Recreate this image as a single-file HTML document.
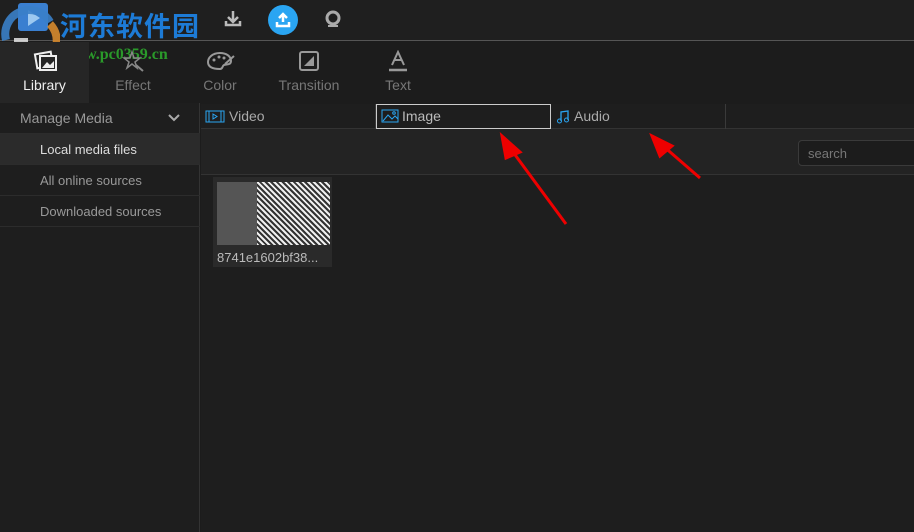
<!DOCTYPE html>
<html><head><meta charset="utf-8"><style>
*{margin:0;padding:0;box-sizing:border-box}
body{width:914px;height:532px;background:#1c1c1c;font-family:"Liberation Sans","Noto Sans CJK SC",sans-serif;position:relative;overflow:hidden;color:#aaa}
.abs{position:absolute}
.top{left:0;top:0;width:914px;height:41px;background:#1f1f1f;border-bottom:1px solid #555}
.tab{position:absolute;top:42px;height:61px;font-size:14px;color:#777;text-align:center}
.tab svg{display:block;margin:8px auto 0}
.tab div{margin-top:5px}
.side{left:0;top:103px;width:200px;height:429px;background:#1e1e1e;border-right:1px solid #333}
.row{position:absolute;left:0;width:200px;height:31px;font-size:13px;color:#999;line-height:31px;border-bottom:1px solid #2c2c2c}
.mt{left:201px;top:104px;width:713px;height:25px;background:#1e1e1e;border-bottom:1px solid #333}
.mtab{position:absolute;top:104px;height:25px;font-size:14px;color:#aaa;line-height:25px;border-right:1px solid #3a3a3a}
.mtab svg{position:absolute}
</style></head><body>
<div class="abs top"></div>
<svg class="abs" style="left:0;top:0" width="60" height="64"><rect x="18" y="3" width="30" height="28" rx="3" fill="#3a7fd0"/><path d="M28 10 L40 18 L28 26Z" fill="#9cc8f0"/><path d="M6 40 A24 24 0 0 1 50 22" stroke="#3a80c8" stroke-width="8" fill="none" opacity=".9"/><path d="M50 24 A24 24 0 0 1 14 58" stroke="#d68a2e" stroke-width="8" fill="none" opacity=".9"/><rect x="14" y="38" width="14" height="16" fill="#f0f0f0" opacity=".8"/></svg>
<div class="abs" style="left:60px;top:5px;font-size:27px;font-weight:bold;color:#1d7bd6;letter-spacing:1px">河东软件园</div>
<div class="abs" style="left:62px;top:46px;font-size:16px;font-weight:bold;color:#2a9a2a;font-family:'Liberation Serif',serif">www.pc0359.cn</div>
<svg class="abs" style="left:224px;top:10px" width="18" height="18"><path d="M9 1V11M4 7L9 12L14 7" stroke="#bbb" stroke-width="2.5" fill="none"/><path d="M2 11V15H16V11" stroke="#bbb" stroke-width="2.5" fill="none"/></svg>
<div class="abs" style="left:268px;top:5px;width:30px;height:30px;border-radius:50%;background:#2aa5f2"></div>
<svg class="abs" style="left:275px;top:12px" width="16" height="16"><path d="M8 2V10M4 6L8 2L12 6" stroke="#fff" stroke-width="2.5" fill="none"/><path d="M2 10V14H14V10" stroke="#fff" stroke-width="2.5" fill="none"/></svg>
<svg class="abs" style="left:324px;top:10px" width="18" height="18"><circle cx="9" cy="8" r="6" stroke="#aaa" stroke-width="3" fill="none"/><path d="M4 16H14" stroke="#aaa" stroke-width="2"/></svg>
<div class="abs" style="left:0;top:42px;width:89px;height:61px;background:#262626"></div>
<div class="tab" style="left:0;width:89px;color:#eee"><svg width="24" height="22"><rect x="3" y="3" width="16" height="14" fill="none" stroke="#eee" stroke-width="2" transform="rotate(-10 11 10)"/><rect x="7" y="6" width="16" height="14" fill="#262626" stroke="#eee" stroke-width="2"/><path d="M9 18L14 12L17 15L21 11V18Z" fill="#eee"/></svg><div>Library</div></div>
<div class="tab" style="left:95px;width:76px"><svg width="24" height="22"><path d="M11 2L13 8L19 8L14 12L16 18L11 14L6 18L8 12L3 8L9 8Z" stroke="#888" stroke-width="1.5" fill="none"/><path d="M15 15L22 21" stroke="#888" stroke-width="2"/></svg><div>Effect</div></div>
<div class="tab" style="left:182px;width:76px"><svg width="30" height="22"><path d="M15 3C7 3 3 8 3 12C3 17 8 19 15 19C18 19 17 16 19 15C22 14 26 15 26 11C26 6 21 3 15 3Z" stroke="#999" stroke-width="2" fill="none"/><circle cx="9" cy="10" r="1.5" fill="#999"/><circle cx="14" cy="7" r="1.5" fill="#999"/><circle cx="19" cy="8" r="1.5" fill="#999"/><path d="M20 14L29 6" stroke="#999" stroke-width="2"/></svg><div>Color</div></div>
<div class="tab" style="left:270px;width:78px"><svg width="22" height="22"><rect x="2" y="2" width="18" height="18" rx="2" stroke="#999" stroke-width="2" fill="none"/><path d="M6 16L16 6V16Z" fill="#999"/></svg><div>Transition</div></div>
<div class="tab" style="left:370px;width:56px"><svg width="22" height="22"><path d="M5 15L11 2L17 15M7.5 10H14.5" stroke="#999" stroke-width="2" fill="none"/><path d="M2 20H20" stroke="#999" stroke-width="2.5"/></svg><div>Text</div></div>
<div class="abs side"></div>
<div class="row" style="top:103px;padding-left:20px;font-size:14px">Manage Media<svg style="position:absolute;right:20px;top:11px" width="12" height="8"><path d="M1 1L6 6L11 1" stroke="#aaa" stroke-width="2" fill="none"/></svg></div>
<div class="row" style="top:134px;padding-left:40px;background:#2b2b2b;color:#ddd">Local media files</div>
<div class="row" style="top:165px;padding-left:40px">All online sources</div>
<div class="row" style="top:196px;padding-left:40px">Downloaded sources</div>
<div class="abs mt"></div>
<div class="mtab" style="left:201px;width:175px;padding-left:28px"><svg style="left:4px;top:6px" width="20" height="13"><rect x="1" y="1" width="18" height="11" stroke="#2aa5f2" fill="none"/><path d="M4 1V12M16 1V12M8 4L12 6.5L8 9Z" stroke="#2aa5f2" fill="none"/></svg>Video</div>
<div class="mtab" style="left:376px;width:175px;padding-left:25px;border:1px solid #ccc;line-height:23px;color:#bbb"><svg style="left:4px;top:4px" width="18" height="14"><rect x="1" y="1" width="16" height="12" stroke="#2aa5f2" fill="none"/><path d="M2 12L7 6L11 10L14 7L17 10" stroke="#2aa5f2" fill="none"/><circle cx="13" cy="4" r="1.3" stroke="#2aa5f2" fill="none"/></svg>Image</div>
<div class="mtab" style="left:551px;width:175px;padding-left:23px"><svg style="left:5px;top:6px" width="14" height="14"><path d="M5 11V2L12 1V10" stroke="#2aa5f2" stroke-width="1.3" fill="none"/><circle cx="3.5" cy="11" r="2" stroke="#2aa5f2" fill="none"/><circle cx="10.5" cy="10" r="2" stroke="#2aa5f2" fill="none"/></svg>Audio</div>
<div class="abs" style="left:201px;top:129px;width:713px;height:403px;background:#1e1e1e"></div>
<div class="abs" style="left:201px;top:129px;width:713px;height:46px;background:#232323;border-bottom:1px solid #333"></div>
<div class="abs" style="left:798px;top:140px;width:130px;height:26px;border:1px solid #3a3a3a;border-radius:4px;background:#1c1c1c;font-size:13px;color:#777;padding:5px 9px">search</div>
<div class="abs" style="left:213px;top:177px;width:119px;height:90px;background:#2a2a2a"></div>
<div class="abs" style="left:217px;top:182px;width:113px;height:63px;background:repeating-linear-gradient(45deg,#eee 0 2px,#333 2px 4px)"></div>
<div class="abs" style="left:217px;top:182px;width:40px;height:63px;background:#555"></div>
<div class="abs" style="left:217px;top:250px;font-size:13px;color:#bbb">8741e1602bf38...</div>
<svg class="abs" style="left:0;top:0" width="914" height="532"><g stroke="#e00" stroke-width="3" fill="#e00"><line x1="566" y1="224" x2="510" y2="148"/><polygon points="502,136 520,152 506,158"/><line x1="700" y1="178" x2="662" y2="145"/><polygon points="652,136 672,146 660,156"/></g></svg>
</body></html>
